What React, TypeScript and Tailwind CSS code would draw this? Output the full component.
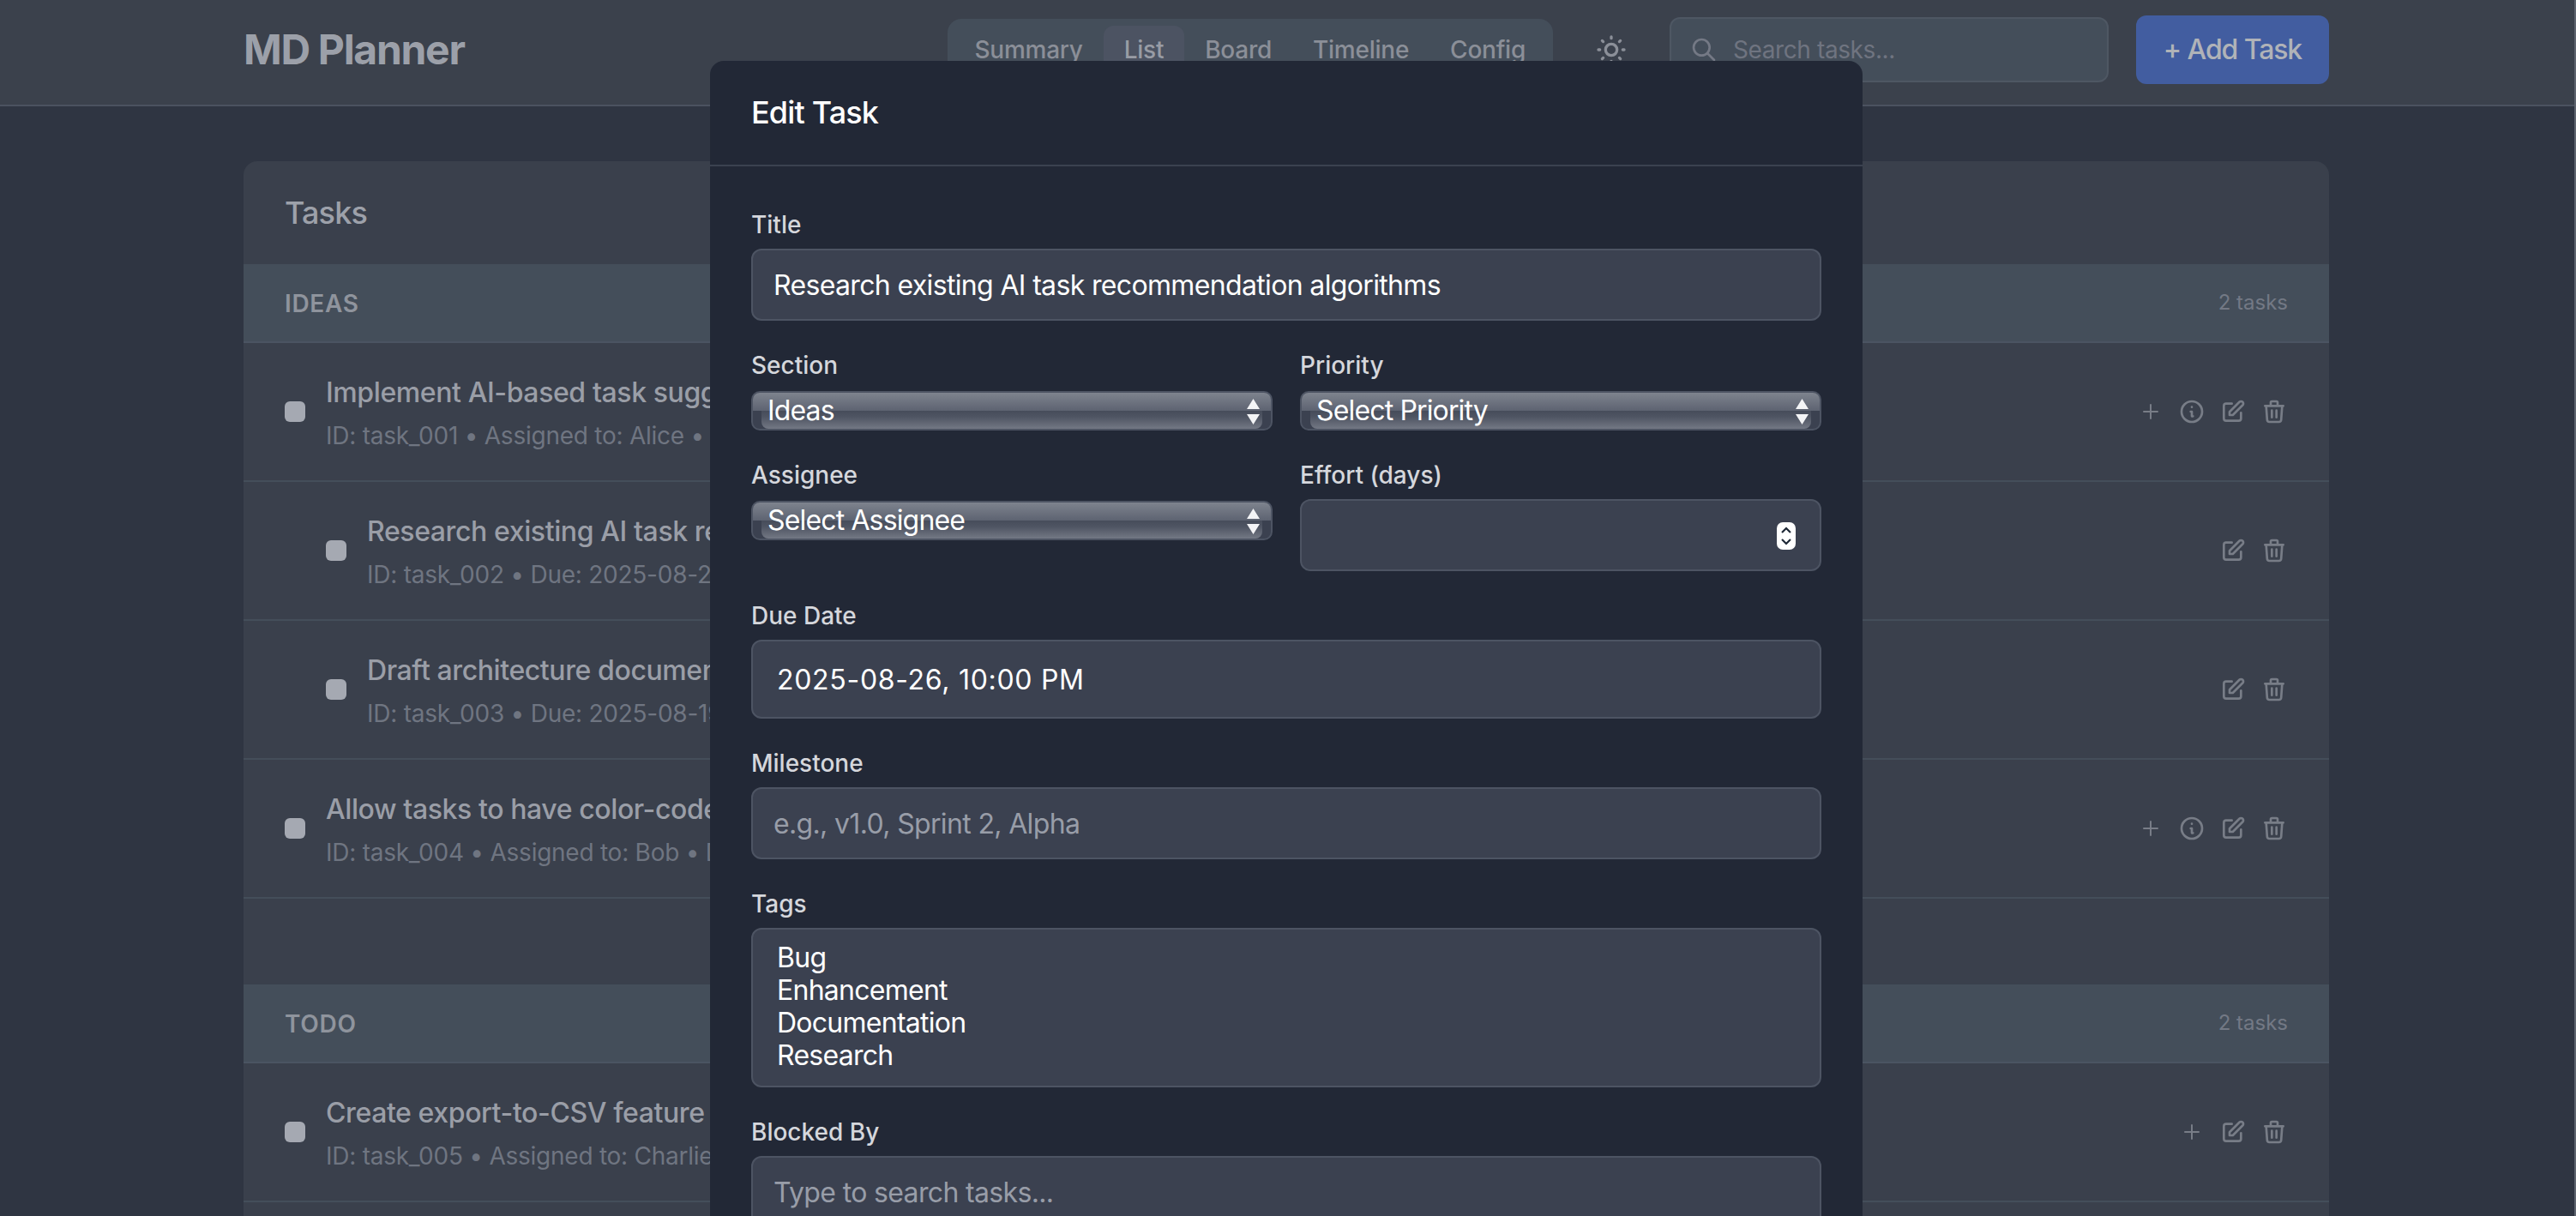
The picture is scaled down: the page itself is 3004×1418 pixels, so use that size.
import React from 'react';
import {
  HiOutlineInformationCircle,
  HiOutlinePencilAlt,
  HiOutlinePlus,
  HiOutlineSearch,
  HiOutlineSun,
  HiOutlineTrash,
} from 'react-icons/hi';

type Task = { title: string; meta: string; nested?: boolean; plus?: boolean; info?: boolean };

const sections: { name: string; count: number; tasks: Task[] }[] = [
  {
    name: 'Ideas',
    count: 2,
    tasks: [
      { title: 'Implement AI-based task suggestions', meta: 'ID: task_001 • Assigned to: Alice • Due: 2025-09-01', plus: true, info: true },
      { title: 'Research existing AI task recommendation algorithms', meta: 'ID: task_002 • Due: 2025-08-26', nested: true },
      { title: 'Draft architecture document', meta: 'ID: task_003 • Due: 2025-08-19', nested: true },
      { title: 'Allow tasks to have color-coded labels', meta: 'ID: task_004 • Assigned to: Bob • Due: 2025-09-05', plus: true, info: true },
    ],
  },
  {
    name: 'Todo',
    count: 2,
    tasks: [{ title: 'Create export-to-CSV feature', meta: 'ID: task_005 • Assigned to: Charlie', plus: true }],
  },
];

const tabs = ['Summary', 'List', 'Board', 'Timeline', 'Config'];

const Label = ({ children }: { children: React.ReactNode }) => (
  <label className="block mb-2 text-[28px] leading-[40px] font-medium text-[#d5d7dc]">{children}</label>
);

const inputClass =
  'block w-full h-[84px] px-6 bg-[#3b4150] border-2 border-[#4d5463] rounded-xl text-[32px] tracking-[-0.65px] text-white placeholder:text-[#989da8] outline-none';

// Safari's aqua select, which the page leaves unstyled
const GlossySelect = ({ value }: { value: string }) => (
  <div className="relative mt-[10px] h-[46px] rounded-[10px] border-2 border-[#4d5463] bg-[#3b4150] overflow-hidden">
    <div className="h-[21px] bg-[linear-gradient(#7e838e,#5d6371)]" />
    <div className="h-[21px] mx-[10px] rounded-b-[8px] bg-[linear-gradient(#464c5a,#4f5563_35%,#737884)]" />
    <span className="absolute left-[17px] top-0 text-[32px] leading-[42px] tracking-[-0.85px] text-white">{value}</span>
    <svg className="absolute right-[13px] top-[7px]" width="15" height="30" viewBox="0 0 15 30">
      <path d="M7.5 0 15 12H0zM0 18h15l-7.5 12z" fill="#f3f4f6" />
    </svg>
  </div>
);

const TaskRow = ({ task }: { task: Task }) => (
  <div className={`flex items-center justify-between h-[162px] border-b-2 border-[#444e5a] pr-12 ${task.nested ? 'pl-24' : 'pl-12'}`}>
    <div className="flex items-center gap-6">
      <div className="w-6 h-6 rounded-md bg-[#a5a9b2]" />
      <div>
        <div className="pt-[2px] text-[32px] leading-[48px] tracking-[-0.4px] font-medium text-[#9a9ea7]">{task.title}</div>
        <div className="mt-[6px] text-[28px] leading-[40px] tracking-[-0.25px] text-[#6f7581]">{task.meta}</div>
      </div>
    </div>
    <div className="flex items-center gap-4 text-[#787d87]">
      {task.plus && (
        <div className="w-8 h-8 flex items-center justify-center">
          <HiOutlinePlus size={24} />
        </div>
      )}
      {task.info && <HiOutlineInformationCircle size={32} />}
      <HiOutlinePencilAlt size={32} />
      <HiOutlineTrash size={32} />
    </div>
  </div>
);

const App: React.FC = () => {
  return (
    <div className="relative h-[1418px] overflow-hidden bg-[#2f3542] font-['Inter',sans-serif] antialiased">
      <header className="h-[124px] bg-[#3b414c] border-b-2 border-[#4b5260] pt-[18px]">
        <div className="ml-[284px] w-[2432px] flex items-center justify-between">
          <h1 className="text-[48px] leading-[80px] tracking-[-1.3px] font-bold text-[#9ca0a9]">MD Planner</h1>
          <div className="flex items-center gap-8">
            <nav className="flex p-2 rounded-2xl bg-[#444e5a]">
              {tabs.map((tab) => (
                <div
                  key={tab}
                  className={`px-6 py-2 rounded-xl text-[28px] leading-[40px] tracking-[-0.25px] font-medium ${tab === 'List' ? 'bg-[#4c5362] text-[#989ca5]' : 'text-[#8b8f98]'}`}
                >
                  {tab}
                </div>
              ))}
            </nav>
            <div className="w-[72px] flex justify-center text-[#8b8f98]">
              <HiOutlineSun size={40} />
            </div>
            <div className="flex items-center gap-[18px] w-[512px] h-[76px] pl-[22px] rounded-xl bg-[#444e5a] border-2 border-[#4e5763]">
              <HiOutlineSearch size={32} className="text-[#747985]" />
              <span className="text-[28px] tracking-[-0.4px] text-[#6f7480]">Search tasks...</span>
            </div>
            <button className="h-[80px] w-[225px] rounded-xl bg-[#425da0] text-[32px] tracking-[-1.1px] font-medium text-[#b0b3b8]">+ Add Task</button>
          </div>
        </div>
      </header>

      <main className="ml-[284px] w-[2432px] mt-16 rounded-t-2xl bg-[#3a404c]">
        <div className="h-[120px] flex items-center px-12 text-[36px] tracking-[-0.85px] font-medium text-[#9da1aa]">Tasks</div>
        {sections.map((section) => (
          <section key={section.name} className="pb-[100px]">
            <div className="flex items-center justify-between h-[92px] px-12 bg-[#444e5a] border-b-2 border-[#4b5462]">
              <span className="pt-[2px] text-[28px] font-semibold uppercase tracking-[0.7px] text-[#8f949d]">{section.name}</span>
              <span className="text-[24px] text-[#737985]">{section.count} tasks</span>
            </div>
            {section.tasks.map((task) => (
              <TaskRow key={task.title} task={task} />
            ))}
          </section>
        ))}
      </main>

      <div className="absolute left-[828px] top-[71px] w-[1344px] rounded-t-2xl bg-[#222836]">
        <div className="h-[123px] flex items-center pb-[2px] px-12 border-b-2 border-[#3b4250] text-[36px] tracking-[-0.85px] font-medium text-white">Edit Task</div>
        <form className="flex flex-col gap-8 p-12">
          <div>
            <Label>Title</Label>
            <input className={inputClass} readOnly value="Research existing AI task recommendation algorithms" />
          </div>
          <div className="grid grid-cols-2 gap-x-8 gap-y-8">
            <div>
              <Label>Section</Label>
              <GlossySelect value="Ideas" />
            </div>
            <div>
              <Label>Priority</Label>
              <GlossySelect value="Select Priority" />
            </div>
            <div>
              <Label>Assignee</Label>
              <GlossySelect value="Select Assignee" />
            </div>
            <div>
              <Label>Effort (days)</Label>
              <div className="relative">
                <input className={inputClass} readOnly />
                <div className="absolute right-[30px] top-[27px] w-[22px] h-8 flex flex-col items-center justify-center rounded-[7px] bg-white">
                  <svg width="14" height="28" viewBox="0 0 14 28" fill="none" stroke="#1f2937" strokeWidth="2.2">
                    <path d="m2 10 5-5 5 5M2 18l5 5 5-5" />
                  </svg>
                </div>
              </div>
            </div>
          </div>
          <div>
            <Label>Due Date</Label>
            <div className="h-[92px] flex items-center pt-[2px] px-[28px] bg-[#3b4150] border-2 border-[#4d5463] rounded-xl text-[32px] tracking-[0.7px] text-white">
              2025-08-26, 10:00 PM
            </div>
          </div>
          <div>
            <Label>Milestone</Label>
            <input className={inputClass} readOnly placeholder="e.g., v1.0, Sprint 2, Alpha" />
          </div>
          <div>
            <Label>Tags</Label>
            <div className="h-[186px] pt-[14px] px-[28px] bg-[#3b4150] border-2 border-[#4d5463] rounded-xl text-[32px] leading-[38px] tracking-[-0.74px] text-white">
              <div>Bug</div>
              <div>Enhancement</div>
              <div>Documentation</div>
              <div>Research</div>
            </div>
          </div>
          <div>
            <Label>Blocked By</Label>
            <input className={inputClass} readOnly placeholder="Type to search tasks..." />
          </div>
        </form>
      </div>

      <div className="absolute right-0 top-0 bottom-0 w-[2px] bg-[#5d636e]" />
    </div>
  );
};

export default App;
